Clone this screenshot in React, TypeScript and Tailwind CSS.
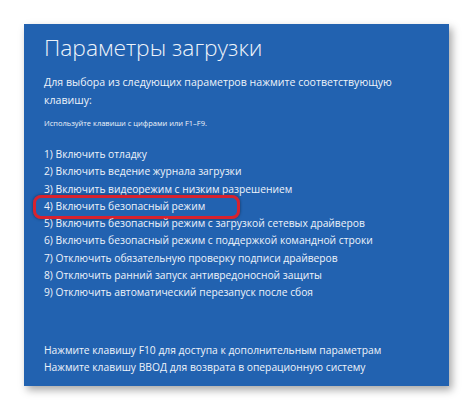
const items = [
  "1) Включить отладку",
  "2) Включить ведение журнала загрузки",
  "3) Включить видеорежим с низким разрешением",
  "4) Включить безопасный режим",
  "5) Включить безопасный режим с загрузкой сетевых драйверов",
  "6) Включить безопасный режим с поддержкой командной строки",
  "7) Отключить обязательную проверку подписи драйверов",
  "8) Отключить ранний запуск антивредоносной защиты",
  "9) Отключить автоматический перезапуск после сбоя",
];

export default function App() {
  return (
    <div
      className="w-[474px] h-[411px] bg-white pt-[24px] pl-[24px]"
      style={{ fontFamily: '"Open Sans", "Noto Sans", sans-serif' }}
    >
      <div className="w-[425px] h-[362px] bg-[#2262b0] text-[#eef3fa] pl-[20px] pt-[9px] shadow-[3px_4px_8px_rgba(0,0,0,0.35)]">
        <h1 className="text-[22.8px] font-light leading-[30px]">Параметры загрузки</h1>

        <p className="mt-[10px] text-[10.6px] leading-[18px]">
          Для выбора из следующих параметров нажмите соответствующую
          <br />
          клавишу:
        </p>

        <p className="mt-[8px] text-[7.5px] leading-[12px]">Используйте клавиши с цифрами или F1–F9.</p>

        <ul className="mt-[17px] text-[10.25px] leading-[17.25px]">
          {items.map((t, i) => (
            <li key={i} className="relative">
              {t}
              {i === 3 && (
                <span className="absolute left-[-11px] top-[-3px] w-[207px] h-[24px] rounded-[8px] border-[3px] border-[#d8222e] shadow-[0_0_3px_rgba(0,0,0,0.5)]" />
              )}
            </li>
          ))}
        </ul>

        <div className="mt-[41px] text-[10.3px] leading-[17px]">
          <p>Нажмите клавишу F10 для доступа к дополнительным параметрам</p>
          <p>Нажмите клавишу ВВОД для возврата в операционную систему</p>
        </div>
      </div>
    </div>
  );
}
